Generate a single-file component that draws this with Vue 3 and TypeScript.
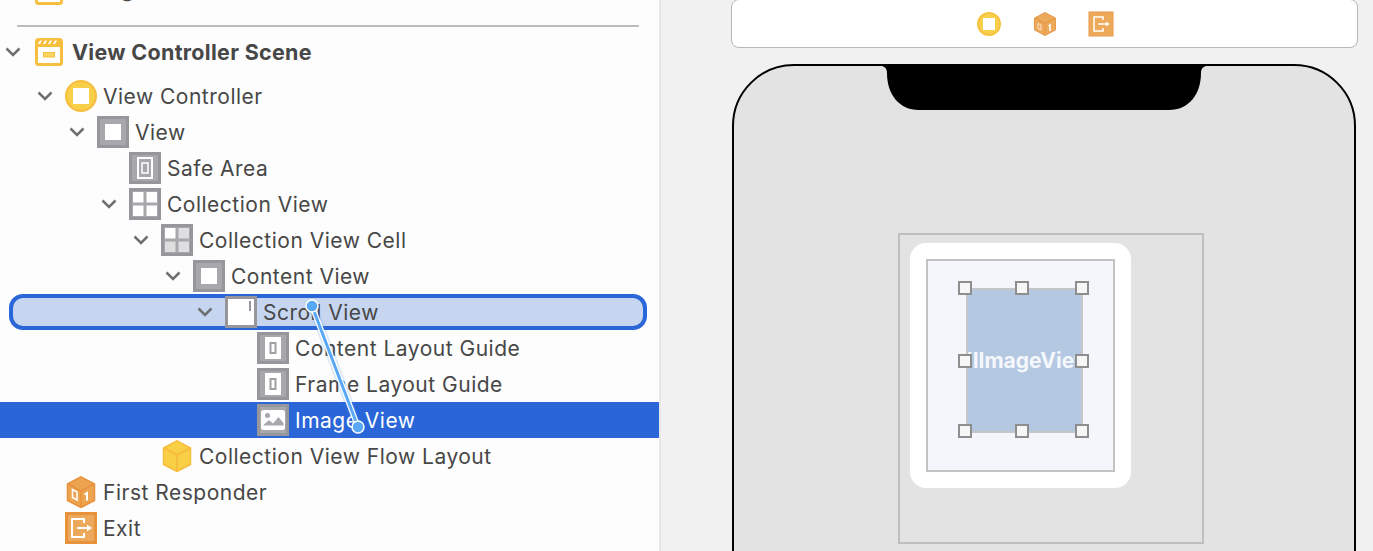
<script setup lang="ts">
interface Row {
  depth: number
  label: string
  icon: string
  open: boolean
  state?: string
}

const rows: Row[] = [
  { depth: 1, label: 'View Controller', icon: 'vc', open: true },
  { depth: 2, label: 'View', icon: 'view', open: true },
  { depth: 3, label: 'Safe Area', icon: 'safe', open: false },
  { depth: 3, label: 'Collection View', icon: 'grid', open: true },
  { depth: 4, label: 'Collection View Cell', icon: 'cell', open: true },
  { depth: 5, label: 'Content View', icon: 'view', open: true },
  { depth: 6, label: 'Scroll View', icon: 'scroll', open: true, state: 'target' },
  { depth: 7, label: 'Content Layout Guide', icon: 'guide', open: false },
  { depth: 7, label: 'Frame Layout Guide', icon: 'guide', open: false },
  { depth: 7, label: 'Image View', icon: 'image', open: false, state: 'selected' },
  { depth: 4, label: 'Collection View Flow Layout', icon: 'cube', open: false },
  { depth: 1, label: 'First Responder', icon: 'responder', open: false },
  { depth: 1, label: 'Exit', icon: 'exit', open: false },
]

const handles = ['tl', 'tc', 'tr', 'ml', 'mr', 'bl', 'bc', 'br']
</script>

<template>
  <div class="window">
    <aside class="outline">
      <div class="scene clipped">
        <svg class="scene-icon" width="28" height="28" viewBox="0 0 28 28">
          <rect x="0" y="0" width="28" height="28" rx="3.5" fill="#f6bf3f" />
          <rect x="3" y="9" width="22" height="16" fill="#fff" />
        </svg>
        <span class="scene-title">Navigation Controller Scene</span>
      </div>
      <div class="separator"></div>
      <div class="scene">
        <svg class="chevron" width="16" height="10" viewBox="0 0 16 10">
          <path d="M1.5 1.5 8 8l6.5-6.500" />
        </svg>
        <svg class="scene-icon" width="28" height="28" viewBox="0 0 28 28">
          <rect x="0" y="0" width="28" height="28" rx="3.5" fill="#f6bf3f" />
          <rect x="3" y="9" width="22" height="16" fill="#fff" />
          <path d="M3 6 5 2.500h2L5 6Zm5 0 2-3.500h2L10 6Zm5 0 2-3.500h2L15 6Zm5 0 2-3.500h2L20 6Z" fill="#fff" />
          <rect x="8.500" y="14.500" width="11" height="4.500" fill="#f9d55f" stroke="#f6bf3f" />
        </svg>
        <span class="scene-title">View Controller Scene</span>
      </div>

      <ul class="tree">
        <li
          v-for="row in rows"
          :key="row.label"
          class="row"
          :class="row.state"
          :style="{ paddingLeft: `${row.depth * 32 + 1}px` }"
        >
          <span class="twist">
            <svg v-if="row.open" class="chevron" width="16" height="10" viewBox="0 0 16 10">
              <path d="M1.500 1.500 8 8l6.500-6.500" />
            </svg>
          </span>
          <svg class="icon" width="32" height="32" viewBox="0 0 32 32">
            <template v-if="row.icon === 'vc'">
              <circle cx="16" cy="16" r="15" fill="#f9cf4a" stroke="#f6bd3e" stroke-width="2" />
              <rect x="8" y="8" width="16" height="16" fill="#fff" />
            </template>
            <template v-else-if="row.icon === 'cube'">
              <path d="M16 .800 29.500 8v16.500L16 31.500 2.500 24.500V8Z" fill="#f9cf45" stroke="#f6bd3e" stroke-width="1.500" />
              <path d="M3 8 16 15 29 8M16 15v16" fill="none" stroke="#f6bd3e" stroke-width="2" />
            </template>
            <template v-else-if="row.icon === 'responder'">
              <path d="M16 .800 29.500 8v16.500L16 31.500 2.500 24.500V8Z" fill="#eca451" stroke="#e8913a" stroke-width="1.500" />
              <path d="M3 8 16 15 29 8M16 15v16" fill="none" stroke="#e8913a" stroke-width="1.500" />
              <path d="M7.500 13.500 12 16v8l-4.500-2.500Z" fill="none" stroke="#fff" stroke-width="1.500" />
              <path d="M19.500 18.500 22 17v7.500" fill="none" stroke="#fff" stroke-width="2" />
            </template>
            <template v-else-if="row.icon === 'exit'">
              <rect x="1.500" y="1.500" width="29" height="29" fill="#eca95b" stroke="#e8933a" stroke-width="3" />
              <path d="M19 11V7H7v18h12v-4" fill="none" stroke="#fff" stroke-width="2" />
              <path d="M12 16h10" stroke="#fff" stroke-width="2" />
              <path d="M22 12.500 27 16l-5 3.500Z" fill="#fff" />
            </template>
            <template v-else>
              <rect x="1.500" y="1.500" width="29" height="29" fill="#a7a7ac" stroke="#97979b" stroke-width="3" />
              <rect v-if="row.icon === 'view'" x="8" y="8" width="16" height="16" fill="#fff" />
              <template v-else-if="row.icon === 'safe'">
                <rect x="9" y="6" width="14" height="20" fill="none" stroke="#fff" stroke-width="2" />
                <rect x="13" y="11" width="6" height="10" fill="none" stroke="#fff" stroke-width="1.500" />
              </template>
              <template v-else-if="row.icon === 'grid'">
                <rect x="4" y="4" width="10.500" height="10.500" fill="#fff" />
                <rect x="17.500" y="4" width="10.500" height="10.500" fill="#fff" />
                <rect x="4" y="17.500" width="10.500" height="10.500" fill="#fff" />
                <rect x="17.500" y="17.500" width="10.500" height="10.500" fill="#fff" />
              </template>
              <template v-else-if="row.icon === 'cell'">
                <rect x="4" y="4" width="10.500" height="10.500" fill="#fff" />
                <rect x="17.500" y="4" width="10.500" height="10.500" fill="#dedede" />
                <rect x="4" y="17.500" width="10.500" height="10.500" fill="#dedede" />
                <rect x="17.500" y="17.500" width="10.500" height="10.500" fill="#dedede" />
              </template>
              <template v-else-if="row.icon === 'scroll'">
                <rect x="3" y="3" width="26" height="26" fill="#fff" />
                <rect x="24" y="5" width="2" height="10" fill="#98989c" />
              </template>
              <template v-else-if="row.icon === 'guide'">
                <rect x="8" y="5" width="16" height="22" fill="#fff" />
                <rect x="13.500" y="11" width="5" height="10" fill="none" stroke="#a0a0a4" stroke-width="2" />
              </template>
              <template v-else-if="row.icon === 'image'">
                <rect x="4" y="6" width="24" height="20" rx="2.500" fill="#fff" />
                <circle cx="10.500" cy="11.500" r="2.500" fill="#a7a7ac" />
                <path d="M6 21.500 12 16l4 3.500L21.500 13l5 6v2.500Z" fill="#a7a7ac" />
              </template>
            </template>
          </svg>
          <span class="label">{{ row.label }}</span>
        </li>
      </ul>

      <svg class="drag" width="660" height="551" viewBox="0 0 660 551">
        <line x1="312" y1="306" x2="358" y2="427" stroke="#4f8fe0" stroke-opacity=".18" stroke-width="9" />
        <line x1="312" y1="306" x2="358" y2="427" stroke="#fff" stroke-width="5.500" />
        <line x1="312" y1="306" x2="358" y2="427" stroke="#58a8f6" stroke-width="3" />
        <circle cx="312" cy="306" r="6" fill="#58a8f6" stroke="#fff" stroke-width="1.500" />
        <circle cx="358" cy="427" r="6" fill="#58a8f6" stroke="#fff" stroke-width="1.500" />
      </svg>
    </aside>

    <main class="canvas">
      <div class="scene-dock">
        <svg width="26" height="26" viewBox="0 0 26 26">
          <circle cx="13" cy="13" r="11" fill="#f9d04c" stroke="#f7c440" stroke-width="2" />
          <rect x="7" y="7" width="12" height="12" fill="#fff" />
        </svg>
        <svg width="24" height="26" viewBox="0 0 24 26">
          <path d="M12 1.500 22.500 7v12L12 24.500 1.500 19V7Z" fill="#eda95a" stroke="#e9994a" />
          <path d="M2 7 12 12.500 22 7M12 12.500V24" fill="none" stroke="#e59240" />
          <path d="M5 12.500 8 14v5l-3-1.500Z" fill="none" stroke="#fbe3c8" />
          <path d="M15.500 15 17 14v6" fill="none" stroke="#fff" stroke-width="1.500" />
        </svg>
        <svg width="26" height="26" viewBox="0 0 26 26">
          <rect x="1" y="1" width="24" height="24" fill="#eda95a" stroke="#e99a48" />
          <path d="M15 9V6H6v14h9v-3" fill="none" stroke="#fff" stroke-width="1.500" />
          <path d="M10 13h8" stroke="#fff" stroke-width="1.500" />
          <path d="M18 10.500 21.500 13 18 15.500Z" fill="#fff" />
        </svg>
      </div>

      <section class="phone">
        <svg class="notch" width="326" height="46" viewBox="0 0 326 46">
          <path d="M0 0H326V2C323 2 320 4 320 9 320 30 308 46 288 46H38C18 46 6 30 6 9 6 4 3 2 0 2Z" fill="#000" />
        </svg>
        <div class="collection">
          <div class="cell">
            <div class="cell-content">
              <div class="image-view">
                <span class="image-name">UIImageView</span>
              </div>
              <i v-for="h in handles" :key="h" class="handle" :class="h"></i>
            </div>
          </div>
        </div>
      </section>
    </main>
  </div>
</template>

<style>
html,
body {
  margin: 0;
  overflow: hidden;
  background: #f1f1f1;
}
</style>

<style scoped>
.window {
  display: flex;
  width: 1373px;
  height: 551px;
  overflow: hidden;
  font-family: Inter, "Liberation Sans", sans-serif;
  color: #474747;
}

.outline {
  position: relative;
  flex: none;
  width: 659px;
  height: 551px;
  overflow: hidden;
  background: #fdfdfd;
  border-right: 2px solid #e6e6e6;
}

.scene {
  display: flex;
  align-items: center;
  height: 36px;
  padding-left: 5px;
}

.scene.clipped {
  margin-top: -27px;
  padding-left: 35px;
}

.scene.clipped .scene-title {
  margin-top: -4px;
}

.scene > .chevron {
  margin-right: 14px;
}

.scene-title {
  margin-left: 9px;
  font-size: 21.500px;
  font-weight: 700;
  letter-spacing: 0.3px;
  white-space: nowrap;
}

.separator {
  height: 2px;
  margin: 16px 20px 7px 17px;
  background: #bcbcbc;
}

.tree {
  margin: 8px 0 0;
  padding: 0;
  list-style: none;
}

.row {
  position: relative;
  display: flex;
  align-items: center;
  height: 36px;
}

.twist {
  display: flex;
  flex: none;
  justify-content: center;
  box-sizing: border-box;
  width: 32px;
  padding-right: 8px;
}

.chevron {
  position: relative;
  z-index: 1;
  display: block;
  flex: none;
  fill: none;
  stroke: #6f6f72;
  stroke-width: 2.500px;
}

.icon {
  position: relative;
  z-index: 1;
  flex: none;
}

.label {
  position: relative;
  z-index: 1;
  margin-left: 6px;
  font-size: 21px;
  letter-spacing: 0.5px;
  white-space: nowrap;
}

.row.target::before {
  position: absolute;
  top: 0;
  left: 9px;
  width: 630px;
  height: 28px;
  border: 4px solid #2a66d8;
  border-radius: 14px;
  background: #c6d6f1;
  content: "";
}

.row.selected {
  background: #2a66d8;
}

.row.selected .label {
  color: #fff;
}

.drag {
  position: absolute;
  top: 0;
  left: 0;
  z-index: 2;
  pointer-events: none;
}

.canvas {
  display: flex;
  flex: 1;
  flex-direction: column;
  align-items: flex-start;
  min-width: 0;
  padding-left: 70px;
}

.scene-dock {
  display: flex;
  flex: none;
  align-items: center;
  justify-content: center;
  gap: 31px;
  box-sizing: border-box;
  width: 627px;
  height: 49px;
  margin-top: -1px;
  border: 1.500px solid #b7b7b7;
  border-radius: 8px;
  background: #fff;
}

.phone {
  position: relative;
  flex: none;
  box-sizing: border-box;
  width: 624px;
  height: 600px;
  margin-top: 16px;
  margin-left: 1px;
  border: 2px solid #000;
  border-radius: 62px;
  background: #e3e3e3;
}

.notch {
  position: absolute;
  top: -2px;
  left: 147px;
}

.collection {
  position: absolute;
  top: 167px;
  left: 164px;
  box-sizing: border-box;
  width: 306px;
  height: 311px;
  border: 2px solid #bfbfbf;
}

.cell {
  box-sizing: border-box;
  width: 221px;
  height: 245px;
  margin: 8px 0 0 10px;
  padding: 16px;
  border-radius: 16px;
  background: #fff;
}

.cell-content {
  position: relative;
  box-sizing: border-box;
  width: 189px;
  height: 213px;
  padding: 27px 0 0 38px;
  border: 2px solid #c3c3c3;
  background: #f4f6fb;
}

.image-view {
  display: flex;
  align-items: center;
  justify-content: center;
  box-sizing: border-box;
  width: 117px;
  height: 145px;
  overflow: hidden;
  border: 2px solid #c6c6c8;
  background: #b5c8e1;
}

.image-name {
  flex: none;
  margin-top: -1px;
  font-size: 21px;
  font-weight: 700;
  color: #f4f7fc;
  white-space: nowrap;
}

.handle {
  position: absolute;
  box-sizing: border-box;
  width: 14px;
  height: 14px;
  border: 2px solid #8e8e8e;
  background: #f6f6f6;
}

.tl { top: 20px; left: 30px; }
.tc { top: 20px; left: 87px; }
.tr { top: 20px; left: 147px; }
.ml { top: 93px; left: 30px; }
.mr { top: 93px; left: 147px; }
.bl { top: 163px; left: 30px; }
.bc { top: 163px; left: 87px; }
.br { top: 163px; left: 147px; }
</style>
